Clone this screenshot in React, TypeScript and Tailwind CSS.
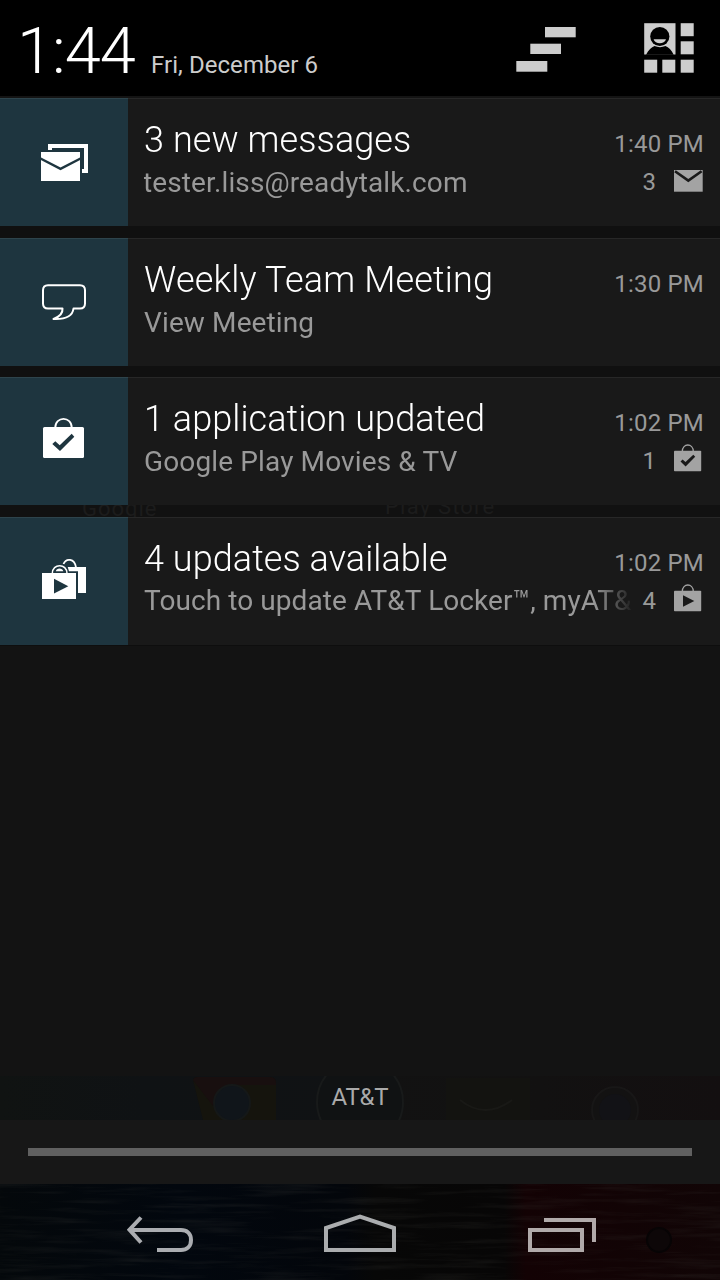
import { FC, ReactNode } from 'react';

interface NotificationItem {
    id: string;
    title: string;
    text: string;
    time: string;
    count?: string;
    icon: ReactNode;
    smallIcon?: ReactNode;
    titleClass: string;
    textClass: string;
    rowClass: string;
}

const MessagesIcon: FC = () => (
    <svg width="128" height="128" viewBox="0 0 128 128">
        <path d="M48 46H88V75H82V71H84V50H52V52H48Z" fill="#fff" />
        <rect x="41" y="54" width="39" height="29" fill="#fff" />
        <path d="M40 60.3L60.5 70.8L81 60.3" fill="none" stroke="#1e353f" strokeWidth="2.4" />
    </svg>
);

const ChatIcon: FC = () => (
    <svg width="128" height="128" viewBox="0 0 128 128" fill="none" stroke="#fff" strokeWidth="2">
        <path
            d="M48 47.2H80Q85 47.2 85 52.2V65.5Q85 70.5 80 70.5H73.5C72.5 78.5 65 81.5 53.5 81C60 78.5 63 75.5 62.5 70.5H48Q43 70.5 43 65.5V52.2Q43 47.2 48 47.2Z"
            strokeLinejoin="round"
        />
    </svg>
);

const BagCheckIcon: FC = () => (
    <svg width="128" height="128" viewBox="0 0 128 128">
        <path d="M55.2 51C55.2 38.8 71.8 38.8 71.8 51" fill="none" stroke="#fff" strokeWidth="1.8" />
        <rect x="43" y="50" width="41" height="31" rx="1.5" fill="#fff" />
        <path d="M52.3 67L55.3 64.3L59.7 68.3L71.7 56.7L74.3 59.7L60 74Z" fill="#1e353f" />
    </svg>
);

const BagsPlayIcon: FC = () => (
    <svg width="128" height="128" viewBox="0 0 128 128">
        <path d="M63.5 47C66 41 74.5 41 76 50.5" fill="none" stroke="#fff" strokeWidth="1.8" />
        <path d="M67.7 50H86V76H78V54.3H69Z" fill="#fff" />
        <path d="M52.3 56.5C52.3 46 67 46 67 56.5" fill="none" stroke="#fff" strokeWidth="1.5" />
        <path d="M55.8 54.2C56.5 50.5 62.5 50.5 63.3 54.2Z" fill="#fff" />
        <rect x="42" y="56" width="34" height="26" fill="#fff" />
        <path d="M54 61.7L68.3 69.3L54 76.5Z" fill="#1e353f" />
    </svg>
);

const SmallMailIcon: FC = () => (
    <svg width="29" height="28" viewBox="0 0 29 28">
        <rect x="0" y="5" width="28.7" height="21.7" fill="#a3a3a3" />
        <path d="M1 6.2L14.3 15.6L27.6 6.2" fill="none" stroke="#191919" strokeWidth="2.6" />
    </svg>
);

const SmallBagIcon: FC<{ children: ReactNode }> = ({ children }) => (
    <svg width="29" height="28" viewBox="0 0 29 28">
        <path d="M8.3 7.5C8.3-1.2 19.3-1.2 19.3 7.5" fill="none" stroke="#a3a3a3" strokeWidth="1.3" />
        <rect x="0" y="6.7" width="27.2" height="20.5" rx="0.8" fill="#a3a3a3" />
        {children}
    </svg>
);

const notifications: NotificationItem[] = [
    {
        id: '1',
        title: '3 new messages',
        text: 'tester.liss@readytalk.com',
        time: '1:40 PM',
        count: '3',
        icon: <MessagesIcon />,
        smallIcon: <SmallMailIcon />,
        titleClass: 'tracking-[0.08px]',
        textClass: 'mt-[5px] -ml-px tracking-[0.12px]',
        rowClass: 'mb-3',
    },
    {
        id: '2',
        title: 'Weekly Team Meeting',
        text: 'View Meeting',
        time: '1:30 PM',
        icon: <ChatIcon />,
        titleClass: 'tracking-[0.16px]',
        textClass: 'mt-[5px] tracking-[0.12px]',
        rowClass: 'mb-[11px]',
    },
    {
        id: '3',
        title: '1 application updated',
        text: 'Google Play Movies & TV',
        time: '1:02 PM',
        count: '1',
        icon: <BagCheckIcon />,
        smallIcon: (
            <SmallBagIcon>
                <path d="M6.5 17.5L8.6 15.4L11.5 18.1L19.3 10.7L21.2 12.7L11.6 22.4Z" fill="#191919" />
            </SmallBagIcon>
        ),
        titleClass: 'tracking-[0.06px]',
        textClass: 'mt-[5px] tracking-[0.13px]',
        rowClass: '',
    },
    {
        id: '4',
        title: '4 updates available',
        text: 'Touch to update AT&T Locker™, myAT&',
        time: '1:02 PM',
        count: '4',
        icon: <BagsPlayIcon />,
        smallIcon: (
            <SmallBagIcon>
                <path d="M9 11.3L20.3 17L9 22.8Z" fill="#191919" />
            </SmallBagIcon>
        ),
        titleClass: 'tracking-[0.06px]',
        textClass: 'mt-1 tracking-[0.08px]',
        rowClass: '',
    },
];

const Notification: FC<{ item: NotificationItem }> = ({ item }) => (
    <article className={`flex h-32 shrink-0 bg-[#191919] ${item.rowClass}`}>
        <div className="w-32 shrink-0 border-t border-[#2e444c] bg-[#1e353f]">
            <div className="-mt-px">{item.icon}</div>
        </div>
        <div className="flex min-w-0 flex-1 border-t border-[#272727] pl-4 pr-4">
            <div className="min-w-0 flex-1 whitespace-nowrap pt-5 [mask-image:linear-gradient(to_right,black_450px,transparent_490px)]">
                <h2 className={`text-[36px] font-light leading-[42px] text-white ${item.titleClass}`}>{item.title}</h2>
                <p className={`text-[28px] leading-[33px] text-[#999] ${item.textClass}`}>{item.text}</p>
            </div>
            <div className="flex w-[72px] shrink-0 flex-col pt-[31px] text-[24px] leading-7 text-[#999]">
                <span className="self-end whitespace-nowrap tracking-[0.2px]">{item.time}</span>
                {item.count && (
                    <div className="mt-[7px] flex justify-end">
                        <span className="mr-[18px] pt-[3px]">{item.count}</span>
                        <span className="w-[30px]">{item.smallIcon}</span>
                    </div>
                )}
            </div>
        </div>
    </article>
);

const Header: FC = () => (
    <header className="flex h-24 shrink-0 bg-black">
        <div className="w-[132px] pl-[17px] pt-[14px] text-[65px] font-light leading-[75px] tracking-[-1px] text-white">1:44</div>
        <div className="w-[384px] pl-[19px] pt-[51px] text-[24px] leading-7 tracking-[0.06px] text-[#ccc]">Fri, December 6</div>
        {/* Clear all */}
        <svg className="mt-[27px]" width="60" height="45" viewBox="0 0 60 45" fill="#cdcdcd">
            <rect x="29" y="0" width="30.7" height="10.3" />
            <rect x="14.3" y="16.7" width="30.7" height="10.3" />
            <rect x="0.3" y="34" width="31" height="10.7" />
        </svg>
        {/* Quick settings */}
        <svg className="ml-[68px] mt-[23px]" width="50" height="50" viewBox="0 0 50 50" fill="#cdcdcd">
            <rect x="0.2" y="0.2" width="31.3" height="31.3" />
            <path d="M2 31.7C4.5 27 7.5 24.3 10.5 23C14 24.5 18 24.5 21.5 23C24.5 24.3 27.5 27 29.7 31.7Z" fill="#000" />
            <circle cx="15.8" cy="13.5" r="9.6" fill="#000" />
            <path d="M9.6 16.3H22C20.5 21.5 11 21.5 9.6 16.3Z" />
            <rect x="36.7" y="0.2" width="13" height="13" />
            <rect x="36.7" y="18.3" width="13" height="13" />
            <rect x="0.2" y="36.7" width="13" height="13" />
            <rect x="18.3" y="36.7" width="13" height="13" />
            <rect x="36.7" y="36.7" width="13" height="13" />
        </svg>
    </header>
);

const CarrierStrip: FC = () => (
    <div className="relative h-11 shrink-0 overflow-hidden bg-[#111313]">
        {/* Dimmed launcher dock */}
        <svg className="absolute inset-0" width="720" height="44">
            <defs>
                <linearGradient id="dock" x1="0" x2="1" y1="0" y2="0">
                    <stop offset="0" stopColor="#101312" />
                    <stop offset="0.2" stopColor="#0f1214" />
                    <stop offset="0.48" stopColor="#101214" />
                    <stop offset="0.52" stopColor="#121212" />
                    <stop offset="0.75" stopColor="#121111" />
                    <stop offset="1" stopColor="#130f10" />
                </linearGradient>
            </defs>
            <rect width="720" height="44" fill="url(#dock)" />
            <path d="M193 4Q194 1 198 1H270Q276 1 276 7V44H203Z" fill="#15140d" />
            <path d="M193 4Q194 1 198 1H270Q276 1 276 7V9H232L213 30Z" fill="#180f0f" />
            <circle cx="232" cy="27" r="18" fill="#10151a" stroke="#151818" strokeWidth="2" />
            <circle cx="360" cy="26" r="43" fill="#101213" stroke="#181a1a" strokeWidth="2" />
            <rect x="446" y="2" width="84" height="42" fill="#131310" />
            <path d="M460 24Q485 44 512 24" fill="none" stroke="#191916" strokeWidth="2" />
            <circle cx="615" cy="34" r="23" fill="#131212" stroke="#181717" strokeWidth="2" />
            <circle cx="615" cy="34" r="16" fill="#121216" />
        </svg>
        <p className="relative pt-[7px] text-center text-[24px] leading-7 tracking-[-0.2px] text-[#aaa]">AT&amp;T</p>
    </div>
);

const NavBar: FC = () => (
    <nav className="relative h-24 shrink-0 overflow-hidden bg-[#040506]">
        {/* Painted wood wallpaper */}
        <svg className="absolute inset-0" width="720" height="96">
            <defs>
                <linearGradient id="paint" x1="0" x2="1" y1="0" y2="0">
                    <stop offset="0" stopColor="#04080b" />
                    <stop offset="0.25" stopColor="#02070e" />
                    <stop offset="0.48" stopColor="#03060b" />
                    <stop offset="0.52" stopColor="#070707" />
                    <stop offset="0.7" stopColor="#070606" />
                    <stop offset="0.73" stopColor="#130204" />
                    <stop offset="1" stopColor="#110506" />
                </linearGradient>
                <filter id="grain" x="0" y="0" width="100%" height="100%" colorInterpolationFilters="sRGB">
                    <feTurbulence type="fractalNoise" baseFrequency="0.012 0.2" numOctaves="4" seed="4" />
                    <feColorMatrix values="0 0 0 0 0.3  0 0 0 0 0.3  0 0 0 0 0.28  1.6 0 0 0 -0.72" />
                </filter>
            </defs>
            <rect width="720" height="96" fill="url(#paint)" />
            <rect width="720" height="96" filter="url(#grain)" opacity="0.25" />
            <circle cx="659" cy="56" r="12" fill="#0d0708" stroke="#070405" strokeWidth="2" />
        </svg>
        <div className="relative flex pl-[127px]">
            <svg className="mt-[30px]" width="67" height="42" viewBox="0 0 67 42" fill="none" stroke="#abadb1" strokeWidth="4">
                <path d="M3 16H54C59.5 16 64 19 64 26C64 33 59.5 36 54 36H30" />
                <path d="M14 3.5L2.5 15.7L14 28.5" />
            </svg>
            <svg className="ml-[130px] mt-[30px]" width="72" height="42" viewBox="0 0 72 42" fill="none" stroke="#abadaf" strokeWidth="4">
                <path d="M2 36V14L36 2.5L70 14V36Z" />
            </svg>
            <svg className="ml-[132px] mt-[30px]" width="68" height="42" viewBox="0 0 68 42" fill="none" stroke="#b1aaaa" strokeWidth="4">
                <path d="M2 16H54V36H2Z" />
                <path d="M16 6H66V28" />
            </svg>
        </div>
    </nav>
);

const App: FC = () => {
    return (
        <div className="flex h-[1280px] w-[720px] flex-col overflow-hidden bg-[#111] font-[Roboto,sans-serif]">
            <Header />
            <main className="flex h-[980px] shrink-0 flex-col bg-[#101010]">
                <div className="h-0.5 shrink-0 bg-[#141414]" />
                <Notification item={notifications[0]} />
                <Notification item={notifications[1]} />
                <Notification item={notifications[2]} />
                {/* Launcher labels showing through the gap */}
                <div className="flex h-3 shrink-0 overflow-hidden bg-[#111] text-[22px] leading-[22px] text-[#1c1c1c]">
                    <span className="-mt-[7px] ml-[82px] w-[303px] tracking-[1px]">Google</span>
                    <span className="-mt-[9px] tracking-[1.2px]">Play Store</span>
                </div>
                <Notification item={notifications[3]} />
                <div className="flex-1 border-t border-[#0e0e0e] bg-[#131313]" />
            </main>
            <CarrierStrip />
            <div className="flex h-16 shrink-0 items-center bg-[#171717] px-7">
                <div className="h-2 w-full bg-[#606060]" />
            </div>
            <NavBar />
        </div>
    );
};

export default App;
